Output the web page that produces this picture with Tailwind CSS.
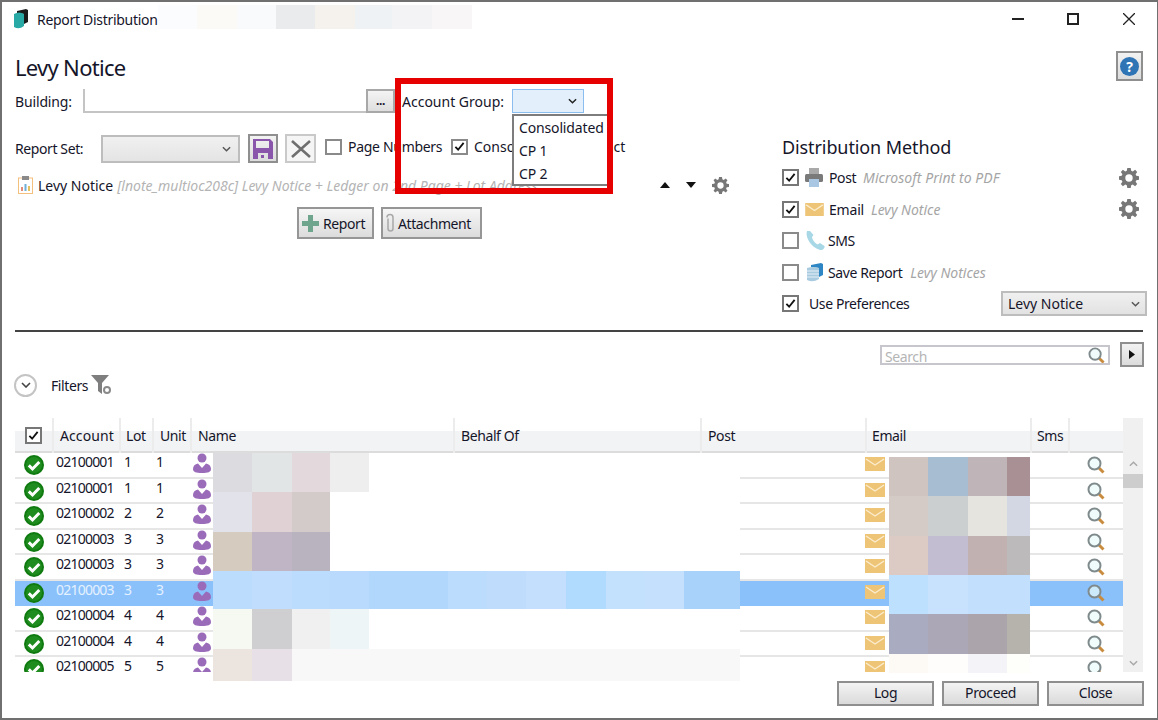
<!DOCTYPE html>
<html lang="en">
<head>
    <meta charset="UTF-8">
    <title>Report Distribution</title>
    <script src="https://cdn.jsdelivr.net/npm/@tailwindcss/browser@4"></script>
</head>
<body class="bg-white">
    <!-- icons -->
    <svg class="hidden">
        <symbol id="check" viewBox="0 0 12 12"><path d="M1.5 6.5 L4.5 9.5 L10.5 2" fill="none" stroke="#111" stroke-width="2"/></symbol>
        <symbol id="chev" viewBox="0 0 10 6"><path d="M1 1 L5 5 L9 1" fill="none" stroke="currentColor" stroke-width="1.6"/></symbol>
        <symbol id="gear" viewBox="0 0 20 20"><path fill="#777" fill-rule="evenodd" d="M8.3 0h3.4l.5 2.7 1.6.7L16.100 1.800l2.100 2.100-1.600 2.300.7 1.600 2.700.5v3.400l-2.700.5-.7 1.600 1.600 2.300-2.100 2.100-2.300-1.600-1.600.7-.5 2.700H8.300l-.5-2.700-1.600-.7-2.300 1.600-2.100-2.100 1.600-2.300-.7-1.600L0 11.700V8.300l2.700-.5.7-1.600-1.600-2.300 2.100-2.100 2.300 1.600 1.600-.7zM10 6.300a3.700 3.700 0 1 0 0 7.400 3.700 3.700 0 0 0 0-7.400z"/></symbol>
        <symbol id="ok" viewBox="0 0 20 20"><circle cx="10" cy="10" r="10" fill="#0f7a0f"/><circle cx="10" cy="10" r="8" fill="#1f8c1f"/><path d="M4.800 10.400 L8.500 14 L15.300 7" fill="none" stroke="#fff" stroke-width="3"/></symbol>
        <symbol id="user" viewBox="0 0 18 20"><circle cx="9" cy="5" r="4.500" fill="#9a6bb9"/><path fill="#9a6bb9" d="M5 10.500 L9 15 L13 10.500 C16 11 18 13 18 16 C18 19 15 20 9 20 C3 20 0 19 0 16 C0 13 2 11 5 10.500 Z"/></symbol>
        <symbol id="mail" viewBox="0 0 20 14"><rect width="20" height="14" fill="#eec576"/><path d="M1 2 L10 8 L19 2" fill="none" stroke="#fbeccd" stroke-width="1.400"/></symbol>
        <symbol id="lens" viewBox="0 0 18 18"><path d="M11 11 L16.500 16.500" stroke="#c98b3e" stroke-width="3"/><circle cx="7.500" cy="7.500" r="6" fill="#e9fbfa" fill-opacity=".7" stroke="#7f8a8c" stroke-width="2"/></symbol>
    </svg>

    <div class="relative w-[1158px] h-[720px] flex flex-col overflow-hidden border-l-2 border-t-2 border-b-2 border-r border-[#707070] font-['Noto_Sans',sans-serif] text-[14px] tracking-[-0.4px] text-[#15152a]">

        <!-- title bar -->
        <div class="h-[36px] shrink-0 flex items-center pl-[11px] pb-[2px]">
            <svg class="w-[16px] h-[20px] mr-[8px]" viewBox="0 0 16 20">
                <path d="M4 2 L13 0 L15 1 V13 L11 15 V5 L4 4 Z" fill="#1b1b1b"/>
                <path d="M1 5 Q6 2 11 5 V17 Q6 21 1 18 Z" fill="#28a9a6"/>
            </svg>
            <span class="tracking-[-0.3px]">Report Distribution</span>
            <div class="ml-auto flex items-center">
                <div class="w-[12px] h-[2px] bg-[#222] mr-[43px]"></div>
                <div class="w-[12px] h-[12px] border-2 border-[#222] mr-[44px]"></div>
                <svg class="w-[12px] h-[12px] mr-[22px]" viewBox="0 0 12 12"><path d="M0 0 L12 12 M12 0 L0 12" stroke="#222" stroke-width="1.300"/></svg>
            </div>
        </div>

        <!-- top section -->
        <div class="h-[292px] shrink-0 flex pl-[13px]">
            <div class="w-[767px] shrink-0">
                <h1 class="mt-[13px] h-[32px] text-[22px] leading-[32px] tracking-[-0.7px]">Levy Notice</h1>

                <div class="mt-[6px] h-[24px] flex items-center">
                    <span class="w-[68px] tracking-[-0.15px]">Building:</span>
                    <div class="w-[283px] h-[24px] border-l-2 border-b-2 border-[#c4c4c4]"></div>
                    <div class="w-[29px] h-[24px] border-2 border-[#a8a8a8] bg-gradient-to-b from-[#f4f4f4] to-[#dedede] flex items-center justify-center text-[12px] font-bold leading-none pb-[1px]">...</div>
                    <span class="ml-[7px] w-[110px] tracking-[0px]">Account Group:</span>
                    <div class="w-[72px] h-[24px] border border-[#8cbdf0] bg-[#e3f0fc] flex items-center justify-end pr-[6px] text-[#222]">
                        <svg class="w-[9px] h-[6px]"><use href="#chev"/></svg>
                    </div>
                </div>

                <div class="mt-[21px] h-[29px] flex items-center">
                    <span class="w-[86px]">Report Set:</span>
                    <div class="w-[139px] h-[28px] border-2 border-[#bdbdbd] bg-gradient-to-b from-[#f0f0f0] to-[#e4e4e4] flex items-center justify-end pr-[7px] text-[#555]">
                        <svg class="w-[9px] h-[6px]"><use href="#chev"/></svg>
                    </div>
                    <div class="ml-[8px] w-[30px] h-[29px] border-2 border-[#8f8f8f] bg-gradient-to-b from-[#f2f2f2] to-[#dcdcdc] flex items-center justify-center">
                        <svg class="w-[20px] h-[20px]" viewBox="0 0 20 20"><path fill="#8a56ac" fill-rule="evenodd" d="M0 0h17l3 3v17H0zM3 2v7h13V2zM5 14v6h10v-6z"/><rect x="8" y="16" width="3" height="3" fill="#8a56ac"/></svg>
                    </div>
                    <div class="ml-[7px] w-[31px] h-[29px] border-2 border-[#c9c9c9] bg-[#f5f5f5] flex items-center justify-center">
                        <svg class="w-[20px] h-[18px]" viewBox="0 0 20 18"><path d="M1 1 L19 17 M19 1 L1 17" stroke="#6f6f6f" stroke-width="2.600"/></svg>
                    </div>
                    <div class="ml-[9px] mb-[4px] w-[17px] h-[16px] border-2 border-[#8a8a8a]"></div>
                    <span class="ml-[6px] mb-[4px] w-[103px] tracking-[-0.3px]">Page Numbers</span>
                    <div class="mb-[4px] w-[17px] h-[16px] border-2 border-[#8a8a8a] flex items-center justify-center">
                        <svg class="w-[11px] h-[11px]"><use href="#check"/></svg>
                    </div>
                    <span class="ml-[6px] mb-[4px] tracking-[0px]">Consolidate by Contact</span>
                </div>

                <div class="mt-[13px] h-[18px] flex items-center pl-[3px] relative">
                    <svg class="w-[15px] h-[18px] mr-[5px]" viewBox="0 0 15 18">
                        <rect x=".5" y="2" width="14" height="15.500" fill="#fff" stroke="#f3c07e"/>
                        <rect x="4" y="0" width="7" height="4" fill="#8a8a8a"/>
                        <rect x="3" y="11" width="2" height="4" fill="#e08a7a"/><rect x="6.500" y="8" width="2" height="7" fill="#6fb0d8"/><rect x="10" y="10" width="2" height="5" fill="#e3c25f"/>
                    </svg>
                    <span class="tracking-[0px]">Levy Notice</span>
                    <span class="ml-[4px] italic text-[#b4b4b4] whitespace-nowrap tracking-[0px]">[lnote_multioc208c] Levy Notice + Ledger on 2nd Page + Lot Address</span>
                    <div class="absolute left-[645px] top-0 h-[18px] flex items-center">
                        <svg class="w-[10px] h-[6px] mr-[16px]" viewBox="0 0 10 6"><path d="M5 0 L10 6 H0 Z" fill="#111"/></svg>
                        <svg class="w-[10px] h-[6px] mr-[16px]" viewBox="0 0 10 6"><path d="M0 0 H10 L5 6 Z" fill="#111"/></svg>
                        <svg class="w-[17px] h-[17px]"><use href="#gear"/></svg>
                    </div>
                </div>

                <div class="mt-[13px] ml-[282px] h-[32px] flex gap-[7px]">
                    <div class="w-[77px] h-[32px] border-2 border-[#969696] bg-gradient-to-b from-[#f6f6f6] to-[#dcdcdc] flex items-center pl-[3px] gap-[4px]">
                        <svg class="w-[17px] h-[17px]" viewBox="0 0 17 17"><path d="M6 0h5v6h6v5h-6v6H6v-6H0V6h6z" fill="#6fa58d"/></svg>
                        <span>Report</span>
                    </div>
                    <div class="w-[101px] h-[32px] border-2 border-[#969696] bg-gradient-to-b from-[#f6f6f6] to-[#dcdcdc] flex items-center pl-[2px] gap-[3px]">
                        <svg class="w-[10px] h-[20px]" viewBox="0 0 10 20"><path d="M2.500 5 V15 a2.500 2.500 0 0 0 5 0 V4 a3 3 0 0 0 -6 0" transform="translate(.5 .5)" fill="none" stroke="#a8a8a8" stroke-width="1.500"/></svg>
                        <span>Attachment</span>
                    </div>
                </div>
            </div>

            <div class="w-[365px] shrink-0">
                <div class="mt-[13px] mr-[4px] flex justify-end">
                    <div class="w-[27px] h-[30px] border-2 border-[#8f8f8f] bg-gradient-to-b from-[#f2f2f2] to-[#dcdcdc] flex items-center justify-center">
                        <div class="w-[19px] h-[19px] rounded-full bg-[#2f74b5] text-white text-[14px] font-bold leading-[19px] text-center tracking-normal">?</div>
                    </div>
                </div>
                <div class="mt-[54px] h-[24px] text-[18px] leading-[24px] tracking-[-0.1px]">Distribution Method</div>

                <div class="mt-[3px] h-[31.5px] flex items-center">
                    <div class="w-[17px] h-[17px] border-2 border-[#777] flex items-center justify-center mr-[6px]"><svg class="w-[11px] h-[11px]"><use href="#check"/></svg></div>
                    <svg class="w-[18px] h-[20px] mr-[6px]" viewBox="0 0 18 20"><rect x="4" y="0" width="10" height="6" fill="#a9a9a9"/><rect x="0" y="6" width="18" height="8" rx="1.500" fill="#7a7a7a"/><rect x="4" y="11" width="10" height="8" fill="#a9c7e3"/></svg>
                    <span>Post</span>
                    <span class="ml-[7px] italic text-[#a5a5a5] tracking-[0.05px]">Microsoft Print to PDF</span>
                    <svg class="ml-auto mr-[8px] w-[20px] h-[20px]"><use href="#gear"/></svg>
                </div>
                <div class="h-[31.5px] flex items-center">
                    <div class="w-[17px] h-[17px] border-2 border-[#777] flex items-center justify-center mr-[6px]"><svg class="w-[11px] h-[11px]"><use href="#check"/></svg></div>
                    <svg class="w-[19px] h-[13px] mr-[5px]"><use href="#mail"/></svg>
                    <span class="tracking-[-0.2px]">Email</span>
                    <span class="ml-[7px] italic text-[#a5a5a5] tracking-[0px]">Levy Notice</span>
                    <svg class="ml-auto mr-[8px] w-[20px] h-[20px]"><use href="#gear"/></svg>
                </div>
                <div class="h-[31.5px] flex items-center">
                    <div class="w-[17px] h-[17px] border-2 border-[#8a8a8a] mr-[6px]"></div>
                    <svg class="w-[20px] h-[20px] mr-[3px]" viewBox="0 0 20 20"><path d="M2 0 C0 5 5 16 15 19 C18 19.500 20 17 19.500 15 L15 12 L12.500 13.500 C9.500 12 7.500 9 7 6 L8.500 4 L5 0 Z" fill="#a8d7e6"/></svg>
                    <span>SMS</span>
                </div>
                <div class="h-[31.5px] flex items-center">
                    <div class="w-[17px] h-[17px] border-2 border-[#8a8a8a] mr-[8px]"></div>
                    <svg class="w-[16px] h-[19px] mr-[5px]" viewBox="0 0 16 19"><path d="M4 2 L14 0 L16 1 V12 L12 14 V5 L4 4 Z" fill="#2f86c4"/><path d="M0 5 Q6 3 12 5 V16 Q6 20 0 17 Z" fill="#a9cbe0"/><path d="M0 8 H12 M0 11 H12 M0 14 H12" stroke="#fff" stroke-width=".7"/></svg>
                    <span>Save Report</span>
                    <span class="ml-[8px] italic text-[#a5a5a5] tracking-[0px]">Levy Notices</span>
                </div>
                <div class="h-[31.5px] flex items-center">
                    <div class="w-[17px] h-[17px] border-2 border-[#777] flex items-center justify-center mr-[10px]"><svg class="w-[11px] h-[11px]"><use href="#check"/></svg></div>
                    <span>Use Preferences</span>
                    <div class="ml-auto w-[146px] h-[25px] border-2 border-[#bdbdbd] bg-gradient-to-b from-[#f0f0f0] to-[#e2e2e2] flex items-center px-[5px] text-[#555]">
                        <span class="text-[#15152a] tracking-[0px]">Levy Notice</span>
                        <svg class="ml-auto w-[9px] h-[6px]"><use href="#chev"/></svg>
                    </div>
                </div>
            </div>
        </div>

        <div class="ml-[13px] w-[1128px] h-[2px] shrink-0 bg-[#444]"></div>

        <!-- search -->
        <div class="mt-[10px] h-[25px] shrink-0 flex items-center justify-end pr-[13px]">
            <div class="w-[230px] h-[20px] mt-[1px] border-2 border-[#c6c6cc] flex items-center pl-[3px] pr-[3px] text-[#b5b5b5] overflow-hidden">
                <span class="pt-[3px]">Search</span>
                <svg class="ml-auto w-[17px] h-[17px] mt-[1px]"><use href="#lens"/></svg>
            </div>
            <div class="ml-[10px] w-[24px] h-[25px] border-2 border-[#8f8f8f] bg-gradient-to-b from-[#f2f2f2] to-[#dcdcdc] flex items-center justify-center">
                <svg class="w-[6px] h-[9px]" viewBox="0 0 6 9"><path d="M0 0 L6 4.500 L0 9 Z" fill="#111"/></svg>
            </div>
        </div>

        <!-- filters -->
        <div class="mt-[7px] h-[22px] shrink-0 flex items-center pl-[12px]">
            <div class="w-[23px] h-[23px] rounded-full border-2 border-[#c4c4c4] flex items-center justify-center text-[#444]">
                <svg class="w-[10px] h-[6px]"><use href="#chev"/></svg>
            </div>
            <span class="ml-[14px]">Filters</span>
            <svg class="ml-[3px] w-[21px] h-[20px]" viewBox="0 0 21 20">
                <path d="M0 0 H18 L11 8 V19 L7 16 V8 Z" fill="#7e7e7e"/>
                <circle cx="16" cy="15" r="3" fill="none" stroke="#8a8a8a" stroke-width="2"/>
            </svg>
        </div>

        <!-- table -->
        <div class="mt-[22px] ml-[13px] w-[1128px] h-[254px] shrink-0 flex overflow-hidden">
            <div class="w-[1108px] shrink-0">
                <div class="h-[35px] grid grid-cols-[39px_67px_33px_38px_263px_247px_165px_165px_38px_53px] border-b-2 border-[#dcdcdc] bg-gradient-to-b from-white from-40% to-[#f2f3f5] to-40%">
                    <div class="border-r-2 border-[#ececec] flex items-center justify-center"><div class="w-[17px] h-[17px] border-2 border-[#777] bg-white flex items-center justify-center"><svg class="w-[11px] h-[11px]"><use href="#check"/></svg></div></div>
                    <div class="border-r-2 border-[#ececec] pl-[6px] leading-[35px] tracking-[0.1px]">Account</div>
                    <div class="border-r-2 border-[#ececec] pl-[5px] leading-[35px]">Lot</div>
                    <div class="border-r-2 border-[#ececec] pl-[6px] leading-[35px]">Unit</div>
                    <div class="border-r-2 border-[#ececec] pl-[6px] leading-[35px]">Name</div>
                    <div class="border-r-2 border-[#ececec] pl-[6px] leading-[35px]">Behalf Of</div>
                    <div class="border-r-2 border-[#ececec] pl-[6px] leading-[35px]">Post</div>
                    <div class="border-r-2 border-[#ececec] pl-[5px] leading-[35px]">Email</div>
                    <div class="border-r-2 border-[#ececec] pl-[5px] leading-[35px]">Sms</div>
                    <div></div>
                </div>
                <div id="rows"></div>
            </div>
            <!-- scrollbar -->
            <div class="w-[20px] shrink-0 bg-[#f0f0f0] flex flex-col items-center text-[#a8a8a8]">
                <svg class="mt-[43px] w-[9px] h-[6px] rotate-180"><use href="#chev"/></svg>
                <div class="mt-[7px] w-[20px] h-[14px] bg-[#cdcdcd]"></div>
                <svg class="mt-[172px] w-[9px] h-[6px]"><use href="#chev"/></svg>
            </div>
        </div>

        <!-- footer buttons -->
        <div class="mt-[9px] h-[24px] shrink-0 flex justify-end gap-[8px] pr-[13px]">
            <div class="w-[97px] h-[25px] border-2 border-[#8f8f8f] bg-gradient-to-b from-[#f4f4f4] to-[#dadada] text-center leading-[19px]">Log</div>
            <div class="w-[97px] h-[25px] border-2 border-[#8f8f8f] bg-gradient-to-b from-[#f4f4f4] to-[#dadada] text-center leading-[19px]">Proceed</div>
            <div class="w-[97px] h-[25px] border-2 border-[#8f8f8f] bg-gradient-to-b from-[#f4f4f4] to-[#dadada] text-center leading-[19px]">Close</div>
        </div>

        <!-- blurred title -->
        <div class="absolute left-[156px] top-[3px] h-[24px] flex">
            <div class="w-[39px] bg-[#fbfcfe]"></div><div class="w-[40px] bg-[#fbfaf7]"></div><div class="w-[39px] bg-[#f9fafb]"></div><div class="w-[39px] bg-[#eaebed]"></div><div class="w-[40px] bg-[#f5f2ee]"></div><div class="w-[37px] bg-[#eff2f4]"></div><div class="w-[40px] bg-[#f3f3f5]"></div><div class="w-[40px] bg-[#f8f6f6]"></div>
        </div>

        <!-- blurred names -->
        <div class="absolute left-[211px] top-[451px] w-[527px] h-[228px] bg-white flex flex-col">
            <div class="h-[39px] flex"><div class="w-[39px] bg-[#dcdbe0]"></div><div class="w-[40px] bg-[#e2e5e5]"></div><div class="w-[38px] bg-[#e3d8dc]"></div><div class="w-[39px] bg-[#eeeeef]"></div></div>
            <div class="h-[40px] flex"><div class="w-[39px] bg-[#e2e3ea]"></div><div class="w-[40px] bg-[#e0d2d4]"></div><div class="w-[38px] bg-[#d2cbca]"></div></div>
            <div class="h-[39px] flex"><div class="w-[39px] bg-[#d5cbbf]"></div><div class="w-[40px] bg-[#bfb5c4]"></div><div class="w-[38px] bg-[#b8b3be]"></div></div>
            <div class="h-[38px] flex"><div class="w-[39px] bg-[#bcdcfd]"></div><div class="w-[40px] bg-[#c0ddfd]"></div><div class="w-[38px] bg-[#bbdcfd]"></div><div class="w-[39px] bg-[#b9dafd]"></div><div class="w-[79px] bg-[#b1d7fd]"></div><div class="w-[39px] bg-[#bcdcfd]"></div><div class="w-[39px] bg-[#bfdcfd]"></div><div class="w-[40px] bg-[#c3dffd]"></div><div class="w-[40px] bg-[#b1dbfe]"></div><div class="w-[39px] bg-[#c3e0fd]"></div><div class="w-[39px] bg-[#c5e0fd]"></div><div class="w-[56px] bg-[#a9d2fb]"></div></div>
            <div class="h-[40px] flex"><div class="w-[39px] bg-[#f5f9f2]"></div><div class="w-[40px] bg-[#cfced1]"></div><div class="w-[38px] bg-[#eff0ef]"></div><div class="w-[39px] bg-[#edf5f7]"></div></div>
            <div class="h-[32px] flex"><div class="w-[39px] bg-[#ece5df]"></div><div class="w-[40px] bg-[#e7e1e7]"></div><div class="w-[448px] bg-[#f8f8f8]"></div></div>
        </div>

        <!-- blurred emails -->
        <div class="absolute left-[887px] top-[455px] w-[141px] flex flex-col">
            <div class="h-[39px] flex"><div class="w-[39px] bg-[#cfc4c0]"></div><div class="w-[40px] bg-[#a7bdd1]"></div><div class="w-[39px] bg-[#bfb5b9]"></div><div class="w-[23px] bg-[#a89095]"></div></div>
            <div class="h-[40px] flex"><div class="w-[39px] bg-[#d5cbc6]"></div><div class="w-[40px] bg-[#cbcfd0]"></div><div class="w-[39px] bg-[#e5e4df]"></div><div class="w-[23px] bg-[#d3d7e4]"></div></div>
            <div class="h-[39px] flex"><div class="w-[39px] bg-[#dccbc5]"></div><div class="w-[40px] bg-[#c2bdd0]"></div><div class="w-[39px] bg-[#c1b1b0]"></div><div class="w-[23px] bg-[#bdbabc]"></div></div>
            <div class="h-[39px] flex"><div class="w-[39px] bg-[#bce0fe]"></div><div class="w-[40px] bg-[#c8e2fe]"></div><div class="w-[39px] bg-[#c2dffe]"></div><div class="w-[23px] bg-[#c2dffe]"></div></div>
            <div class="h-[40px] flex"><div class="w-[39px] bg-[#a9abc0]"></div><div class="w-[40px] bg-[#aba7b6]"></div><div class="w-[39px] bg-[#aba4aa]"></div><div class="w-[23px] bg-[#b5b3ab]"></div></div>
            <div class="h-[19px] flex"><div class="w-[39px] bg-[#fdfaf6]"></div><div class="w-[40px] bg-[#fefdfb]"></div><div class="w-[39px] bg-[#f4f4f8]"></div><div class="w-[23px] bg-[#fefefb]"></div></div>
        </div>

        <!-- open dropdown -->
        <div class="absolute left-[510px] top-[112px] w-[98px] h-[72px] bg-white border-2 border-[#7d7d7d] pl-[5px] leading-[23px] tracking-[-0.15px]">
            <div>Consolidated</div>
            <div>CP 1</div>
            <div>CP 2</div>
        </div>

        <!-- red highlight -->
        <div class="absolute left-[393px] top-[76px] w-[218px] h-[116px] border-[6px] border-[#e60000]"></div>
    </div>

    <script>
        var rows = [
            ['02100001', '1', '1'], ['02100001', '1', '1'], ['02100002', '2', '2'],
            ['02100003', '3', '3'], ['02100003', '3', '3'], ['02100003', '3', '3', true],
            ['02100004', '4', '4'], ['02100004', '4', '4'], ['02100005', '5', '5']
        ];
        var html = '';
        rows.forEach(function (r) {
            var rowClass = r[3] ? 'bg-[#8bc1fb] text-[#e4f1ff]' : 'border-b-2 border-[#e6e6e6]';
            html += `
                <div class="h-[25.5px] grid grid-cols-[39px_67px_33px_38px_263px_247px_165px_165px_38px_53px] leading-[18px] ${rowClass}">
                    <div class="flex justify-center pt-[2px] pr-[1px]"><svg class="w-[20px] h-[20px]"><use href="#ok"/></svg></div>
                    <div class="pl-[2px] tracking-[-0.78px]">${r[0]}</div>
                    <div class="pl-[3px]">${r[1]}</div>
                    <div class="pl-[2px]">${r[2]}</div>
                    <div class="pl-[1px]"><svg class="w-[18px] h-[20px]"><use href="#user"/></svg></div>
                    <div></div>
                    <div></div>
                    <div class="-ml-[2px] pt-[4px]"><svg class="w-[20px] h-[14px]"><use href="#mail"/></svg></div>
                    <div></div>
                    <div class="pl-[17px] pt-[3px]"><svg class="w-[18px] h-[18px]"><use href="#lens"/></svg></div>
                </div>`;
        });
        document.getElementById('rows').innerHTML = html;
    </script>
</body>
</html>
